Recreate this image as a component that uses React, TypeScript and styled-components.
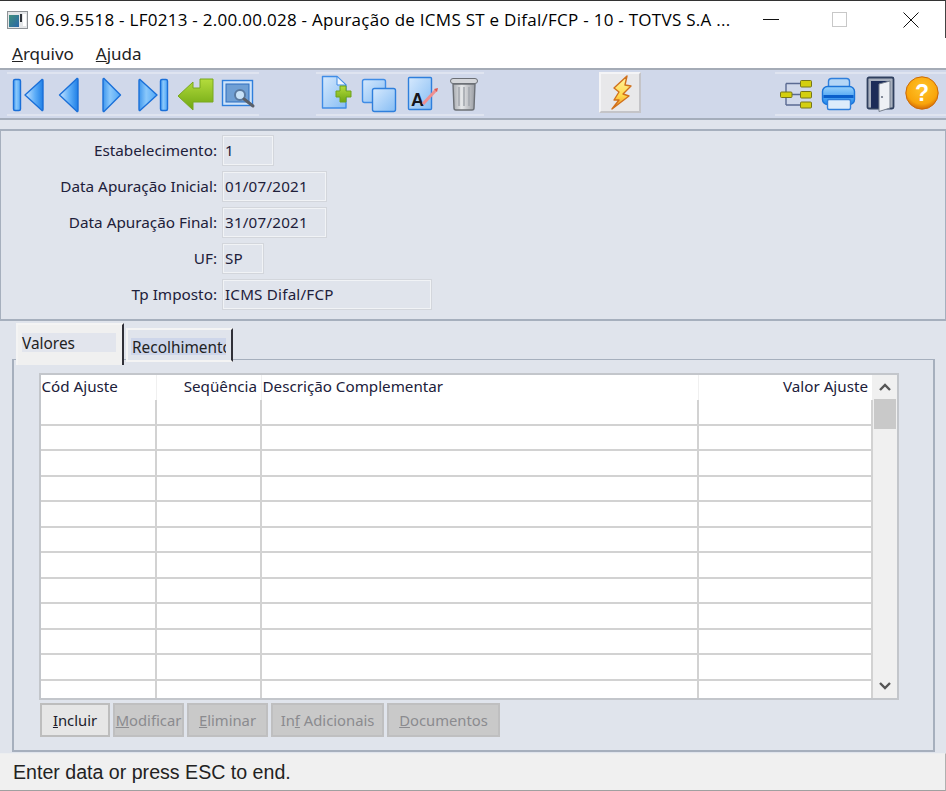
import { Fragment, ReactNode } from 'react';
import styled, { createGlobalStyle } from 'styled-components';

const GlobalStyle = createGlobalStyle`
  html, body {
    margin: 0;
    padding: 0;
    background: #e0e4ec;
  }
  * {
    box-sizing: border-box;
  }
`;

const SWindow = styled.div`
  width: 946px;
  height: 791px;
  display: flex;
  flex-direction: column;
  overflow: hidden;
  background: #e0e4ec;
  font-family: 'Noto Sans', sans-serif;
  color: #1a1a2a;
`;

const STitleBar = styled.div`
  height: 38px;
  flex: none;
  display: flex;
  align-items: center;
  padding-left: 7px;
  background: #fff;
  border-top: 1px solid #333;
  border-right: 1px solid #444;
  color: #000;
`;

const STitle = styled.span`
  margin-left: 7px;
  width: 701px;
  font-family: 'Open Sans', sans-serif;
  font-size: 17px;
  letter-spacing: 0.27px;
  white-space: nowrap;
`;

const SWinButton = styled.div<{ $width: number; $offset?: number }>`
  width: ${({ $width }) => $width}px;
  height: 37px;
  margin-left: ${({ $offset }) => $offset || 0}px;
  display: flex;
  align-items: center;
  justify-content: center;
`;

const SMenuBar = styled.div`
  height: 30px;
  flex: none;
  display: flex;
  align-items: center;
  gap: 22px;
  padding: 1px 0 0 12px;
  background: #fff;
  font-size: 17px;
  color: #222;
`;

const SToolbar = styled.div`
  height: 52px;
  flex: none;
  display: flex;
  align-items: flex-start;
  padding: 2px 0 0 7px;
  background: #d0d8ea;
  border-top: 2px solid #a4abb6;
  border-bottom: 2px solid #a4adbb;
`;

const SToolGroup = styled.div<{ $gapAfter?: number; $grow?: boolean }>`
  display: flex;
  height: 44px;
  flex: ${({ $grow }) => ($grow ? 1 : 'none')};
  padding-left: ${({ $grow }) => ($grow ? 2 : 0)}px;
  margin-right: ${({ $gapAfter }) => $gapAfter || 0}px;
  border-top: 2px solid #dfe4f0;
  border-bottom: 2px solid #dfe4f0;
`;

const SToolIcon = styled.svg`
  display: block;
  width: 42px;
  height: 44px;
  margin-top: -2px;
  flex: none;
`;

const SFlashButton = styled.div`
  width: 42px;
  height: 41px;
  margin: 0 134px 0 0;
  background: #e8e8ea;
  border: 2px solid #c4c4c8;
  border-top-color: #f4f4f6;
  border-left-color: #f4f4f6;
`;

const SFormPanel = styled.div`
  height: 192px;
  margin-top: 9px;
  flex: none;
  display: grid;
  grid-template-columns: 216px 1fr;
  grid-auto-rows: 31px;
  row-gap: 5px;
  column-gap: 5px;
  padding-top: 4px;
  border: 2px solid #a6afbd;
  border-left-width: 1px;
  border-right-width: 1px;
  background: #e0e4ec;
`;

const SLabel = styled.label`
  align-self: center;
  padding-bottom: 2px;
  text-align: right;
  font-size: 15.3px;
  color: #20203a;
`;

const SField = styled.div<{ $width: number }>`
  width: ${({ $width }) => $width}px;
  height: 31px;
  display: flex;
  align-items: center;
  padding: 0 0 2px 1px;
  border: 2px solid #f1f3f6;
  outline: 1px solid #d3d6dc;
  outline-offset: -1px;
  font-size: 15.2px;
  letter-spacing: 0.2px;
  color: #20203a;
`;

const STabsArea = styled.div`
  flex: 1;
  min-height: 0;
  padding: 2px 11px 1px 12px;
`;

const STabStrip = styled.div`
  position: relative;
  z-index: 1;
  height: 36px;
  display: flex;
  align-items: flex-start;
  padding-left: 4px;
`;

const STab = styled.div<{ $active?: boolean }>`
  width: ${({ $active }) => ($active ? 108 : 107)}px;
  height: ${({ $active }) => ($active ? 42 : 34)}px;
  margin: ${({ $active }) => ($active ? '0 2px 0 0' : '5px 0 0 0')};
  padding: ${({ $active }) => ($active ? '8px 6px 0 4px' : '8px 5px 0 3px')};
  flex: none;
  overflow: hidden;
  background: ${({ $active }) => ($active ? '#f0f0f0' : '#e0e4ec')};
  border-top: 2px solid #f4f4f4;
  border-left: 2px solid #f4f4f4;
  border-right: 2px solid #303038;
  border-bottom: ${({ $active }) => ($active ? 'none' : '2px solid #f4f4f4')};
`;

const STabLabel = styled.div<{ $active?: boolean }>`
  height: ${({ $active }) => ($active ? 19 : 17)}px;
  line-height: ${({ $active }) => ($active ? 21 : 20)}px;
  padding-left: ${({ $active }) => ($active ? 0 : 1)}px;
  overflow: ${({ $active }) => ($active ? 'visible' : 'hidden')};
  white-space: nowrap;
  background: ${({ $active }) => ($active ? '#e2e5ed' : '#ced6ea')};
  font-size: 15.4px;
  color: #222;
`;

const STabPanel = styled.div`
  height: 393px;
  padding: 13px 34px 0 25px;
  border: 2px solid #a6afbd;
  border-top-width: 1px;
`;

const SGrid = styled.div`
  width: 860px;
  height: 327px;
  display: flex;
  background: #fff;
  border: 2px solid #c3c6cb;
`;

const SGridBody = styled.div`
  width: 832px;
  flex: none;
  overflow: hidden;
`;

const SHeaderRow = styled.div`
  display: grid;
  grid-template-columns: 116px 105px 437px 174px;
  height: 25px;
`;

const SHeaderCell = styled.div<{ $align?: string }>`
  padding: 0 4px 0 ${({ $align }) => ($align ? 1 : 0.5)}px;
  text-align: ${({ $align }) => $align || 'left'};
  border-right: 1px solid #f0f0f0;
  font-size: 15.2px;
  line-height: 23px;
  white-space: nowrap;
  color: #20203a;
`;

const SRow = styled.div`
  display: grid;
  grid-template-columns: 116px 105px 437px 174px;
  height: 25.5px;
  border-bottom: 2px solid #d2d2d2;
`;

const SCell = styled.div`
  border-right: 2px solid #d2d2d2;
`;

const SScrollbar = styled.div`
  width: 24px;
  flex: none;
  display: flex;
  flex-direction: column;
  background: #f0f0f0;
`;

const SScrollArrow = styled.div`
  height: 24px;
  flex: none;
  display: flex;
  align-items: center;
  justify-content: center;
`;

const SScrollThumb = styled.div`
  height: 30px;
  margin: 0 1px;
  background: #c9c9c9;
`;

const SScrollTrack = styled.div`
  flex: 1;
`;

const SButtonRow = styled.div`
  display: flex;
  gap: 3px;
  margin: 3px 0 0 1px;
`;

const SButton = styled.div<{ $width: number; $disabled?: boolean }>`
  width: ${({ $width }) => $width}px;
  height: 34px;
  display: flex;
  align-items: center;
  justify-content: center;
  white-space: pre;
  background: ${({ $disabled }) => ($disabled ? '#c9c9c9' : '#e6e6e6')};
  border: 2px solid ${({ $disabled }) => ($disabled ? '#bfbfc0' : '#bdbdbd')};
  color: ${({ $disabled }) => ($disabled ? '#8b8b8f' : '#1c1c2c')};
  font-size: 14.8px;
`;

const SStatusBar = styled.div`
  height: 38px;
  flex: none;
  display: flex;
  align-items: center;
  padding: 1px 0 0 13px;
  background: #f0f0f0;
  border-top: 1px solid #eceef0;
  border-bottom: 1px solid #a0a0a0;
  border-right: 1px solid #b0b0b0;
  font-family: 'Liberation Sans', sans-serif;
  font-size: 19.6px;
  color: #222;
`;

const AppIcon = () => (
  <svg width="21" height="18" viewBox="0 0 21 18">
    <defs>
      <linearGradient id="appFill" x1="0" y1="0" x2="1" y2="1">
        <stop offset="0" stopColor="#3f8f7c" />
        <stop offset="1" stopColor="#2a66a8" />
      </linearGradient>
    </defs>
    <rect x="0.5" y="0.5" width="20" height="17" fill="#e4e6e8" stroke="#8e9296" />
    <rect x="2" y="4" width="10" height="12" fill="url(#appFill)" />
    <rect x="13" y="3" width="2" height="8" fill="#30343a" />
    <rect x="16" y="3" width="3" height="12" fill="#fff" />
  </svg>
);

const IconDefs = () => (
  <svg width="0" height="0" style={{ position: 'absolute' }}>
    <defs>
      <linearGradient id="navBlue" x1="0" y1="0" x2="1" y2="0">
        <stop offset="0" stopColor="#c8e4ff" />
        <stop offset="0.55" stopColor="#5eaef8" />
        <stop offset="1" stopColor="#1f7fe6" />
      </linearGradient>
      <linearGradient id="navBlueR" x1="1" y1="0" x2="0" y2="0">
        <stop offset="0" stopColor="#4fa6f6" />
        <stop offset="0.6" stopColor="#8ac8fb" />
        <stop offset="1" stopColor="#3f97ee" />
      </linearGradient>
      <linearGradient id="green" x1="0" y1="0" x2="0" y2="1">
        <stop offset="0" stopColor="#b4dc3c" />
        <stop offset="1" stopColor="#6ea612" />
      </linearGradient>
      <linearGradient id="page" x1="0" y1="0" x2="1" y2="1">
        <stop offset="0" stopColor="#d6e9fd" />
        <stop offset="1" stopColor="#86bdf4" />
      </linearGradient>
      <linearGradient id="gray" x1="0" y1="0" x2="1" y2="0">
        <stop offset="0" stopColor="#a8abb0" />
        <stop offset="0.4" stopColor="#e6e8ea" />
        <stop offset="1" stopColor="#9a9da3" />
      </linearGradient>
      <linearGradient id="bolt" x1="0" y1="0" x2="0" y2="1">
        <stop offset="0" stopColor="#fff6a8" />
        <stop offset="0.6" stopColor="#ffd84a" />
        <stop offset="1" stopColor="#f08a2a" />
      </linearGradient>
      <radialGradient id="help" cx="0.5" cy="0.35" r="0.65">
        <stop offset="0" stopColor="#ffc42a" />
        <stop offset="0.75" stopColor="#f9a50a" />
        <stop offset="1" stopColor="#d56c06" />
      </radialGradient>
      <linearGradient id="printer" x1="0" y1="0" x2="0" y2="1">
        <stop offset="0" stopColor="#9ad2fb" />
        <stop offset="1" stopColor="#1a86ee" />
      </linearGradient>
    </defs>
  </svg>
);

const ToolIcon = ({ children }: { children: ReactNode }) => (
  <SToolIcon viewBox="0 0 42 44">{children}</SToolIcon>
);

const NAV_STROKE = '#1a6fd8';

const FirstIcon = () => (
  <ToolIcon>
    <rect x="6.5" y="7.5" width="7" height="31" rx="1.5" fill="url(#navBlueR)" stroke={NAV_STROKE} strokeWidth="1.4" />
    <path d="M18 23 L35 7.5 Q36 7 36 9 V37 Q36 39 35 38.5 Z" fill="url(#navBlue)" stroke={NAV_STROKE} strokeWidth="1.4" strokeLinejoin="round" />
  </ToolIcon>
);

const PrevIcon = () => (
  <ToolIcon>
    <path d="M10.5 23 L28 6.5 Q29 6 29 8 V38 Q29 40 28 39.5 Z" fill="url(#navBlue)" stroke={NAV_STROKE} strokeWidth="1.4" strokeLinejoin="round" />
  </ToolIcon>
);

const NextIcon = () => (
  <ToolIcon>
    <path d="M29.5 23 L13 6.5 Q12 6 12 8 V38 Q12 40 13 39.5 Z" fill="url(#navBlueR)" stroke={NAV_STROKE} strokeWidth="1.4" strokeLinejoin="round" />
  </ToolIcon>
);

const LastIcon = () => (
  <ToolIcon>
    <path d="M24 23 L7 7.5 Q6 7 6 9 V37 Q6 39 7 38.5 Z" fill="url(#navBlueR)" stroke={NAV_STROKE} strokeWidth="1.4" strokeLinejoin="round" />
    <rect x="27.5" y="7.5" width="7" height="31" rx="1.5" fill="url(#navBlueR)" stroke={NAV_STROKE} strokeWidth="1.4" />
  </ToolIcon>
);

const EnterIcon = () => (
  <ToolIcon>
    <path d="M3 24 L18 10 V16 H25 V7 H38 V30 H18 V38 Z" fill="url(#green)" stroke="#78a81e" strokeLinejoin="round" />
  </ToolIcon>
);

const PreviewIcon = () => (
  <ToolIcon>
    <rect x="5.5" y="8.5" width="30" height="25" fill="#cfe4fa" stroke="#2f7fdc" strokeWidth="1.4" />
    <rect x="9" y="12" width="23" height="18" fill="#6f9fd4" stroke="#2f6fc0" />
    <circle cx="23" cy="23" r="5" fill="#c8e2f8" stroke="#5a7aa0" strokeWidth="2" />
    <path d="M27 27 L36 34" stroke="#5a5f68" strokeWidth="3" strokeLinecap="round" />
  </ToolIcon>
);

const NewIcon = () => (
  <ToolIcon>
    <path d="M6.5 4.5 H21 L30 13 V36 H6.5 Z" fill="url(#page)" stroke="#3f8ce6" strokeWidth="1.4" strokeLinejoin="round" />
    <path d="M21 4.5 V13 H30 Z" fill="#f0f7ff" stroke="#3f8ce6" strokeLinejoin="round" />
    <path d="M24 14 H30 V19 H35 V25 H30 V30 H24 V25 H20 V19 H24 Z" fill="url(#green)" stroke="#6fa31c" strokeLinejoin="round" />
  </ToolIcon>
);

const CopyIcon = () => (
  <ToolIcon>
    <rect x="4.5" y="7.5" width="23" height="23" rx="2" fill="url(#page)" stroke="#3f8ce6" strokeWidth="1.4" />
    <rect x="14.5" y="16.5" width="23" height="23" rx="2" fill="url(#page)" stroke="#2f7fdc" strokeWidth="1.4" />
  </ToolIcon>
);

const EditIcon = () => (
  <ToolIcon>
    <rect x="8.5" y="5.5" width="23" height="32" rx="1" fill="url(#page)" stroke="#2f7fdc" strokeWidth="1.4" />
    <text x="11" y="34" fontFamily="Liberation Sans, sans-serif" fontWeight="700" fontSize="18" fill="#16161c">
      A
    </text>
    <path d="M23 32 L36 18" stroke="#ee8f90" strokeWidth="3" />
    <path d="M34 17 L38 16 L37 20 Z" fill="#e0574f" />
  </ToolIcon>
);

const TrashIcon = () => (
  <ToolIcon>
    <path d="M11 12 H33 L32 36 Q32 38 30 38 H14 Q12 38 12 36 Z" fill="url(#gray)" stroke="#6c7076" strokeWidth="1.4" />
    <rect x="8.5" y="6.5" width="27" height="5" rx="2.5" fill="#d4d6da" stroke="#6c7076" />
    <path d="M17 15 V34 M22 15 V34 M27 15 V34" stroke="#a4a8ae" strokeWidth="1.6" />
  </ToolIcon>
);

const FlashIcon = () => (
  <svg width="38" height="37" viewBox="2 2 38 37" style={{ display: 'block' }}>
    <path
      d="M28 4 L15 16 L20 20 L15 28 L20 28 L13 37 L30 24 L24 22 L32 14 L26 13 Z"
      fill="url(#bolt)"
      stroke="#d0701c"
      strokeWidth="1.4"
      strokeLinejoin="round"
    />
  </svg>
);

const TreeIcon = () => (
  <ToolIcon>
    <path d="M9 11.5 V33 M9 11.5 H23 M15 22.5 H23 M9 33 H23" stroke="#5a6a92" strokeWidth="1.4" fill="none" />
    <rect x="23.5" y="8.5" width="11" height="6.5" rx="1" fill="#d4cf10" stroke="#77761a" />
    <rect x="23.5" y="19.5" width="11" height="6.5" rx="1" fill="#d4cf10" stroke="#77761a" />
    <rect x="23.5" y="30" width="11" height="6" rx="1" fill="#d4cf10" stroke="#77761a" />
    <rect x="3.5" y="20" width="11.5" height="5.5" rx="1" fill="#d4cf10" stroke="#77761a" />
  </ToolIcon>
);

const PrinterIcon = () => (
  <ToolIcon>
    <rect x="9.5" y="6.5" width="21" height="10" rx="3" fill="#b4d6f6" stroke="#2f7fdc" strokeWidth="1.4" />
    <rect x="3.5" y="14.5" width="32" height="18" rx="5" fill="url(#printer)" stroke="#1c74d8" strokeWidth="1.4" />
    <rect x="4.5" y="23" width="30" height="3" fill="#0a5fcb" />
    <rect x="8.5" y="27.5" width="23" height="10" rx="1.5" fill="#dcecfb" stroke="#2f7fdc" strokeWidth="1.4" />
  </ToolIcon>
);

const DoorIcon = () => (
  <ToolIcon>
    <rect x="6.5" y="5.5" width="26" height="31" rx="1.5" fill="#a8b0be" stroke="#30405f" strokeWidth="1.8" />
    <rect x="10" y="9" width="19" height="27" fill="#1c2c58" />
    <path d="M18 12 L29 9 V36 L18 39.5 Z" fill="#eef0f4" stroke="#77808f" />
    <circle cx="21" cy="25" r="1.1" fill="#6b7482" />
  </ToolIcon>
);

const HelpIcon = () => (
  <ToolIcon>
    <circle cx="19" cy="21" r="16.2" fill="url(#help)" stroke="#cc6a08" />
    <text
      x="19"
      y="29"
      textAnchor="middle"
      fontFamily="Liberation Sans, sans-serif"
      fontWeight="700"
      fontSize="23"
      fill="#fff"
    >
      ?
    </text>
  </ToolIcon>
);

const Chevron = ({ up }: { up?: boolean }) => (
  <svg width="12" height="8" viewBox="0 0 12 8">
    <path d={up ? 'M1 7 L6 2 L11 7' : 'M1 1 L6 6 L11 1'} fill="none" stroke="#555" strokeWidth="2.4" />
  </svg>
);

const FIELDS = [
  { label: 'Estabelecimento:', value: '1', width: 52 },
  { label: 'Data Apuração Inicial:', value: '01/07/2021', width: 105 },
  { label: 'Data Apuração Final:', value: '31/07/2021', width: 105 },
  { label: 'UF:', value: 'SP', width: 42 },
  { label: 'Tp Imposto:', value: 'ICMS Difal/FCP', width: 210 },
];

const ROWS = Array.from({ length: 12 }, (_, i) => i);

const BUTTONS = [
  { before: '', key: 'I', after: 'ncluir', width: 70 },
  { before: '', key: 'M', after: 'odificar', width: 71, disabled: true },
  { before: '', key: 'E', after: 'liminar', width: 81, disabled: true },
  { before: 'In', key: 'f', after: ' Adicionais', width: 113, disabled: true },
  { before: '', key: 'D', after: 'ocumentos', width: 113, disabled: true },
];

const App = () => {
  return (
    <SWindow>
      <GlobalStyle />
      <IconDefs />
      <STitleBar>
        <AppIcon />
        <STitle>06.9.5518 - LF0213 - 2.00.00.028 - Apuração de ICMS ST e Difal/FCP - 10 - TOTVS S.A ...</STitle>
        <SWinButton $width={70}>
          <svg width="16" height="2" viewBox="0 0 16 2">
            <rect width="16" height="1" fill="#111" />
          </svg>
        </SWinButton>
        <SWinButton $width={66}>
          <svg width="15" height="15" viewBox="0 0 15 15">
            <rect x="0.5" y="0.5" width="14" height="14" fill="none" stroke="#c8c8c8" />
          </svg>
        </SWinButton>
        <SWinButton $width={69} $offset={4}>
          <svg width="16" height="16" viewBox="0 0 16 16">
            <path d="M0.5 0.5 L15.5 15.5 M15.5 0.5 L0.5 15.5" stroke="#111" />
          </svg>
        </SWinButton>
      </STitleBar>

      <SMenuBar>
        <span>
          <u>A</u>rquivo
        </span>
        <span>
          <u>A</u>juda
        </span>
      </SMenuBar>

      <SToolbar>
        <SToolGroup $gapAfter={57}>
          <FirstIcon />
          <PrevIcon />
          <NextIcon />
          <LastIcon />
          <EnterIcon />
          <PreviewIcon />
        </SToolGroup>
        <SToolGroup $gapAfter={115}>
          <NewIcon />
          <CopyIcon />
          <EditIcon />
          <TrashIcon />
        </SToolGroup>
        <SFlashButton>
          <FlashIcon />
        </SFlashButton>
        <SToolGroup $grow>
          <TreeIcon />
          <PrinterIcon />
          <DoorIcon />
          <HelpIcon />
        </SToolGroup>
      </SToolbar>

      <SFormPanel>
        {FIELDS.map((field) => (
          <Fragment key={field.label}>
            <SLabel>{field.label}</SLabel>
            <SField $width={field.width}>{field.value}</SField>
          </Fragment>
        ))}
      </SFormPanel>

      <STabsArea>
        <STabStrip>
          <STab $active>
            <STabLabel $active>Valores</STabLabel>
          </STab>
          <STab>
            <STabLabel>Recolhimento</STabLabel>
          </STab>
        </STabStrip>
        <STabPanel>
          <SGrid>
            <SGridBody>
              <SHeaderRow>
                <SHeaderCell>Cód Ajuste</SHeaderCell>
                <SHeaderCell $align="right">Seqüência</SHeaderCell>
                <SHeaderCell>Descrição Complementar</SHeaderCell>
                <SHeaderCell $align="right">Valor Ajuste</SHeaderCell>
              </SHeaderRow>
              {ROWS.map((row) => (
                <SRow key={row}>
                  <SCell />
                  <SCell />
                  <SCell />
                  <SCell />
                </SRow>
              ))}
            </SGridBody>
            <SScrollbar>
              <SScrollArrow>
                <Chevron up />
              </SScrollArrow>
              <SScrollThumb />
              <SScrollTrack />
              <SScrollArrow>
                <Chevron />
              </SScrollArrow>
            </SScrollbar>
          </SGrid>
          <SButtonRow>
            {BUTTONS.map((button) => (
              <SButton key={button.key} $width={button.width} $disabled={button.disabled}>
                {button.before}
                <u>{button.key}</u>
                {button.after}
              </SButton>
            ))}
          </SButtonRow>
        </STabPanel>
      </STabsArea>

      <SStatusBar>Enter data or press ESC to end.</SStatusBar>
    </SWindow>
  );
};

export default App;
